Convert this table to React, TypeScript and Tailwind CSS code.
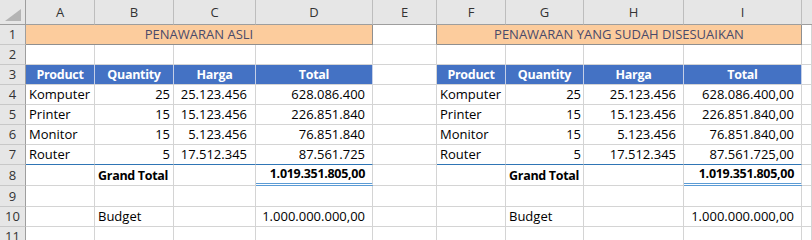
import React from "react";

type Row = { name: string; qty: string; harga: string; total: string; total2: string };

const rows: Row[] = [
  { name: "Komputer", qty: "25", harga: "25.123.456", total: "628.086.400", total2: "628.086.400,00" },
  { name: "Printer", qty: "15", harga: "15.123.456", total: "226.851.840", total2: "226.851.840,00" },
  { name: "Monitor", qty: "15", harga: "5.123.456", total: "76.851.840", total2: "76.851.840,00" },
  { name: "Router", qty: "5", harga: "17.512.345", total: "87.561.725", total2: "87.561.725,00" },
];

const letters = ["A", "B", "C", "D", "E", "F", "G", "H", "I"];

const grid = "border-r border-b border-[#d4d4d4]";
const txtL = "flex items-end pl-[3px] pb-[1px] whitespace-nowrap overflow-hidden";
const txtR = "flex items-end justify-end pb-[1px] whitespace-nowrap overflow-hidden";
const boldT = "font-bold text-[12.5px] tracking-[-0.3px]";

function RowHead({ n }: { n: number }) {
  return (
    <div className="bg-[#e6e6e6] border-r border-b border-r-[#9e9e9e] border-b-[#c8c8c8] flex items-end justify-center pb-[1px] text-[#333333]">
      {n}
    </div>
  );
}

function Empty({ extra = "" }: { extra?: string }) {
  return <div className={`${grid} ${extra}`} />;
}

export default function App() {
  return (
    <div className="w-[812px] h-[240px] overflow-hidden bg-white font-['Open_Sans',sans-serif] text-[13px] leading-[17px] text-black">
      <div className="grid grid-cols-[26px_69px_79px_82px_117px_64px_69px_78px_100px_118px_1fr] grid-rows-[25px_20px_20px_20px_20px_20px_20px_20px_21px_21px_20px_20px]">
        {/* header row */}
        <div className="bg-[#e6e6e6] border-r border-b border-[#9e9e9e] flex items-end justify-end">
          <svg width="20" height="14" viewBox="0 0 20 14" className="mb-[2px] mr-[3px]">
            <polygon points="19,1 19,13 3,13" fill="#b4b4b4" />
          </svg>
        </div>
        {letters.map((l) => (
          <div
            key={l}
            className="bg-[#e6e6e6] border-r border-b border-r-[#bdbdbd] border-b-[#9e9e9e] flex items-center justify-center text-[#333333]"
          >
            {l}
          </div>
        ))}
        <div className="bg-[#e6e6e6] border-b border-b-[#9e9e9e]" />

        {/* row 1 */}
        <RowHead n={1} />
        <div className="col-span-4 bg-[#fccc9d] border-r border-b border-[#8f8f8f] flex items-end justify-center pb-[1px] text-[#4a4a6a]">
          PENAWARAN ASLI
        </div>
        <div className="border-r border-b border-r-[#8f8f8f] border-b-[#d4d4d4]" />
        <div className="col-span-4 bg-[#fccc9d] border-r border-b border-[#8f8f8f] flex items-end justify-center pb-[1px] text-[#4a4a6a]">
          PENAWARAN YANG SUDAH DISESUAIKAN
        </div>
        <Empty />

        {/* row 2 */}
        <RowHead n={2} />
        {letters.map((l) => (
          <Empty key={l} />
        ))}
        <Empty />

        {/* row 3 */}
        <RowHead n={3} />
        {["Product", "Quantity", "Harga", "Total"].map((h) => (
          <div
            key={"a" + h}
            className={`bg-[#4472c4] border-r border-b border-r-[#c5cfe6] border-b-[#d4d4d4] flex items-end justify-center pb-[1px] text-white ${boldT}`}
          >
            {h}
          </div>
        ))}
        <Empty />
        {["Product", "Quantity", "Harga", "Total"].map((h) => (
          <div
            key={"b" + h}
            className={`bg-[#4472c4] border-r border-b border-r-[#c5cfe6] border-b-[#d4d4d4] flex items-end justify-center pb-[1px] text-white ${boldT}`}
          >
            {h}
          </div>
        ))}
        <Empty />

        {/* rows 4-7 */}
        {rows.map((r, i) => {
          const last = i === rows.length - 1;
          const c = last
            ? "border-r border-b border-r-[#d4d4d4] border-b-[#2f75b5]"
            : "border-r border-b border-[#d4d4d4]";
          return (
            <React.Fragment key={r.name}>
              <RowHead n={4 + i} />
              <div className={`${c} ${txtL}`}>{r.name}</div>
              <div className={`${c} ${txtR} pr-[3px]`}>{r.qty}</div>
              <div className={`${c} ${txtR} pr-[8px]`}>{r.harga}</div>
              <div className={`${c} ${txtR} pr-[7px]`}>{r.total}</div>
              <Empty />
              <div className={`${c} ${txtL}`}>{r.name}</div>
              <div className={`${c} ${txtR} pr-[2px]`}>{r.qty}</div>
              <div className={`${c} ${txtR} pr-[7px]`}>{r.harga}</div>
              <div className={`${c} ${txtR} pr-[7px]`}>{r.total2}</div>
              <Empty />
            </React.Fragment>
          );
        })}

        {/* row 8 */}
        <RowHead n={8} />
        <Empty />
        <div className={`${grid} ${txtL} ${boldT}`}>Grand Total</div>
        <Empty />
        <div className={`border-r border-b-[3px] border-double border-r-[#d4d4d4] border-b-[#5b9bd5] ${txtR} pr-[7px] ${boldT}`}>
          1.019.351.805,00
        </div>
        <Empty />
        <Empty />
        <div className={`${grid} ${txtL} ${boldT}`}>Grand Total</div>
        <Empty />
        <div className={`border-r border-b-[3px] border-double border-r-[#d4d4d4] border-b-[#5b9bd5] ${txtR} pr-[7px] ${boldT}`}>
          1.019.351.805,00
        </div>
        <Empty />

        {/* row 9 */}
        <RowHead n={9} />
        {letters.map((l) => (
          <Empty key={l} />
        ))}
        <Empty />

        {/* row 10 */}
        <RowHead n={10} />
        <Empty />
        <div className={`${grid} ${txtL}`}>Budget</div>
        <Empty />
        <div className={`${grid} ${txtR} pr-[7px]`}>1.000.000.000,00</div>
        <Empty />
        <Empty />
        <div className={`${grid} ${txtL}`}>Budget</div>
        <Empty />
        <div className={`${grid} ${txtR} pr-[7px]`}>1.000.000.000,00</div>
        <Empty />

        {/* row 11 */}
        <RowHead n={11} />
        {letters.map((l) => (
          <Empty key={l} />
        ))}
        <Empty />
      </div>
    </div>
  );
}
